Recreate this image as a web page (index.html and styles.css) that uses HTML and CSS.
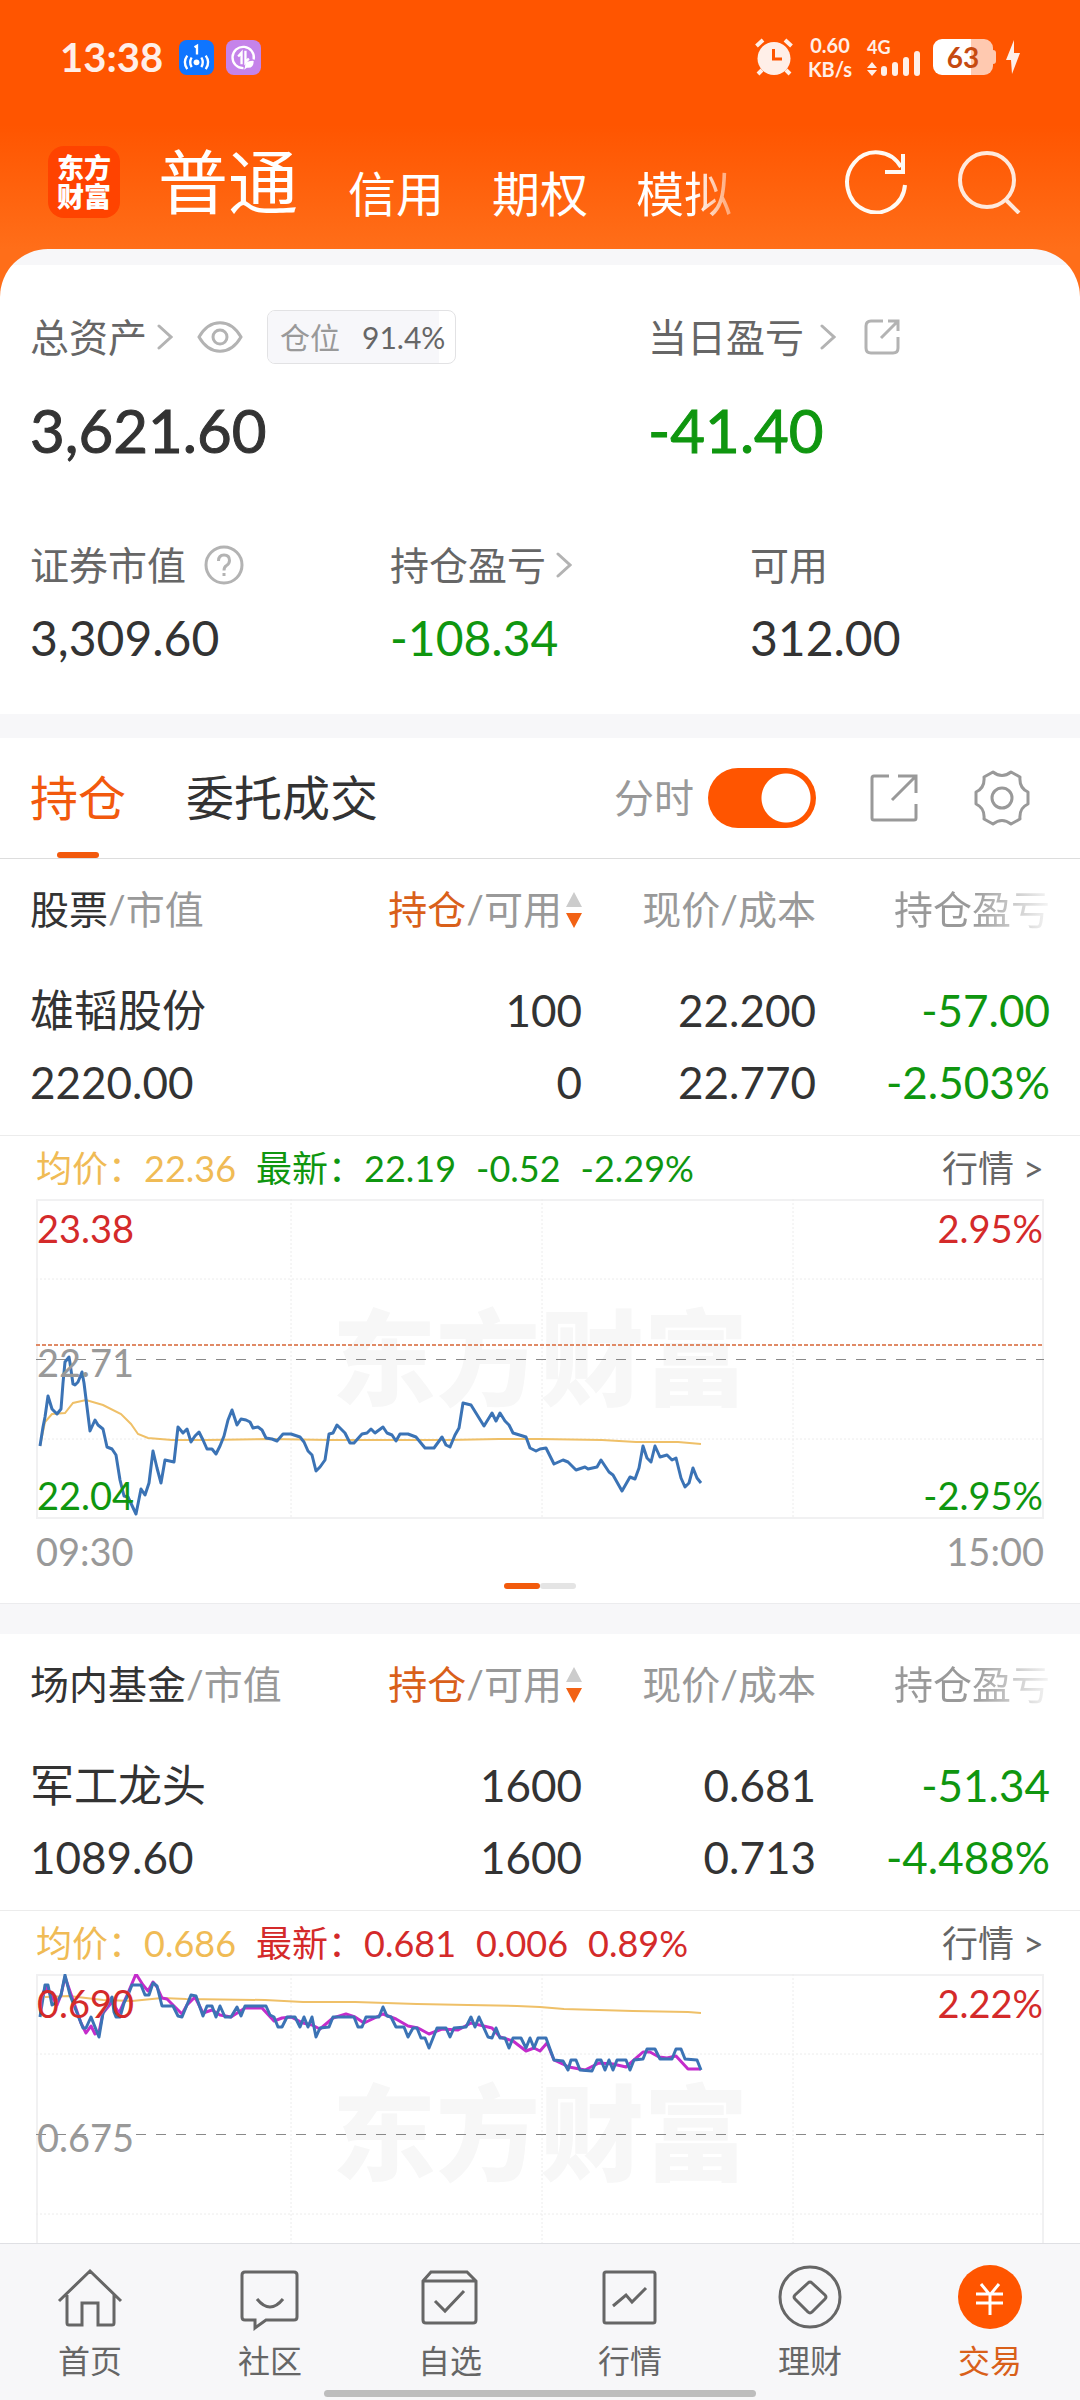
FILE: index.html
```
<!DOCTYPE html>
<html lang="zh-CN">
<head>
<meta charset="utf-8">
<meta name="viewport" content="width=device-width, initial-scale=1">
<title>交易</title>
<link rel="stylesheet" href="styles.css">
</head>
<body>
<div class="app">
  <header class="top">
    <div class="status">
      <div class="status-left">
        <span class="clock">13:38</span>
        <svg class="badge" viewBox="0 0 36 36"><rect width="36" height="36" rx="8" fill="#0f75ff"/><path d="M16 7.500 18.500 6v9" fill="none" stroke="#fff" stroke-width="2.400"/><circle cx="18" cy="23" r="3" fill="#fff"/><path d="M13 18q-3 5 0 10M23 18q3 5 0 10M8.500 16q-5 7 0 14M27.500 16q5 7 0 14" fill="none" stroke="#fff" stroke-width="2.400"/></svg>
        <svg class="badge" viewBox="0 0 36 36"><rect width="36" height="36" rx="8" fill="#c583ea"/><path d="M28.500 20A11 11 0 1 0 18 29M12.500 17l3.500-4v12M20 11v12l3.500-4" fill="none" stroke="#fff" stroke-width="2.400"/><path d="M19.500 28q-.5-7 9-6.500 0 8-7 7l-3 2z" fill="#fff"/></svg>
      </div>
      <div class="status-right">
        <svg class="alarm" viewBox="0 0 38 38"><circle cx="19" cy="20.500" r="16.500" fill="#ffefe8"/><path d="M1.500 8 8 2M36.500 8 30 2M7 32l-4 4M31 32l4 4" stroke="#ffefe8" stroke-width="4"/><path d="M18.500 11v10H27" fill="none" stroke="#f50" stroke-width="3"/></svg>
        <span class="speed"><span>0.60</span><span>KB/s</span></span>
        <span class="signal"><span>4G</span>
          <svg viewBox="0 0 54 26"><path d="M5 12 10 18H0zM5 26 0 20h10z" fill="#ffefe8"/><g fill="#ffefe8"><rect x="14" y="16" width="6" height="10" rx="3"/><rect x="25" y="12" width="6" height="14" rx="3"/><rect x="36" y="7" width="6" height="19" rx="3"/><rect x="47" y="1" width="6" height="25" rx="3"/></g></svg>
        </span>
        <span class="battery">63</span>
        <svg class="bolt" viewBox="0 0 14 34"><path d="M8 0 0 20h5l1 14 8-21H8z" fill="#ffefe8"/></svg>
      </div>
    </div>
    <div class="bar">
      <span class="logo">东方<br>财富</span>
      <nav class="accounts">
        <a class="current" href="#">普通</a><a href="#">信用</a><a href="#">期权</a><a class="faded" href="#">模拟</a>
      </nav>
      <button class="plain" aria-label="刷新"><svg class="i64" viewBox="0 0 64 64"><path d="M61 35a29 30 0 1 1-4-18M59 4v18H41" fill="none" stroke="#fffaf4" stroke-width="4"/></svg></button>
      <button class="plain" aria-label="搜索"><svg class="i64" viewBox="0 0 64 64"><circle cx="29" cy="30" r="27" fill="none" stroke="#ffe9dc" stroke-width="4"/><path d="M48 50 61 63" stroke="#ffe9dc" stroke-width="4"/></svg></button>
    </div>
  </header>

  <main class="content">
    <section class="summary">
      <div class="totals">
        <div>
          <div class="line">
            <span>总资产</span><svg class="chev" viewBox="0 0 16 26"><path d="m2 2 12 11L2 24"/></svg>
            <button class="plain eye" aria-label="显示"><svg viewBox="0 0 46 32"><path d="M2 16C13-3 33-3 44 16 33 35 13 35 2 16z"/><circle cx="23" cy="16" r="7"/></svg></button>
            <span class="chip"><span class="chip-fill" style="width:91.4%"></span><span class="chip-name">仓位</span><span class="chip-num">91.4%</span></span>
          </div>
          <div class="big">3,621.60</div>
        </div>
        <div>
          <div class="line">
            <span>当日盈亏</span><svg class="chev far" viewBox="0 0 16 26"><path d="m2 2 12 11L2 24"/></svg>
            <button class="plain share-s" aria-label="分享"><svg viewBox="0 0 36 36"><path d="M19 2H7Q2 2 2 7v22q0 5 5 5h22q5 0 5-5V18M24 2h10v10M34 2 17 19"/></svg></button>
          </div>
          <div class="big down">-41.40</div>
        </div>
      </div>
      <div class="details">
        <div><div class="line low"><span>证券市值</span><button class="plain help" aria-label="说明"><svg viewBox="0 0 40 40"><circle cx="20" cy="20" r="18"/><path d="M14.500 16q0-6 5.500-6t5.500 5.500q0 3-3 5-2.500 1.500-2.500 5M20 28v3"/></svg></button></div><div class="mid">3,309.60</div></div>
        <div><div class="line low"><span>持仓盈亏</span><svg class="chev" viewBox="0 0 16 26"><path d="m2 2 12 11L2 24"/></svg></div><div class="mid down">-108.34</div></div>
        <div><div class="line low"><span>可用</span></div><div class="mid">312.00</div></div>
      </div>
    </section>

    <section class="block">
      <div class="tabs">
        <a class="tab on" href="#">持仓</a><a class="tab" href="#">委托成交</a>
        <label class="toggle"><span>分时</span><input type="checkbox" role="switch" checked></label>
        <button class="plain share" aria-label="分享"><svg viewBox="0 0 48 48"><path d="M19 2H4Q2 2 2 4v40q0 2 2 2h40q2 0 2-2V30M28 2h18v17M46 2 22 26"/></svg></button>
        <button class="plain gear" aria-label="设置"><svg viewBox="0 0 56 56"><circle cx="28" cy="28" r="10"/><path d="M19 2Q28 9 37 2L46 7Q45 18 54 22V34Q45 38 46 49L37 54Q28 47 19 54L10 49Q11 38 2 34V22Q11 18 10 7z"/></svg></button>
      </div>
      <table class="grid">
        <thead><tr><th class="name"><b>股票</b>/市值</th><th><em>持仓</em>/可用<svg class="sort" viewBox="0 0 16 36"><path d="M8 0 16 15H0z" fill="#ccc"/><path d="M0 21h16L8 36z" fill="#f26214"/></svg></th><th>现价/成本</th><th><span class="fade">持仓盈亏</span></th></tr></thead>
        <tbody><tr><td class="name"><span>雄韬股份</span><span>2220.00</span></td><td><span>100</span><span>0</span></td><td><span>22.200</span><span>22.770</span></td><td class="down"><span>-57.00</span><span>-2.503%</span></td></tr></tbody>
      </table>
      <div class="quote">
        <span class="avg">均价：22.36</span><span class="last down">最新：22.19</span><span class="chg down">-0.52</span><span class="chg down">-2.29%</span><a href="#">行情 &gt;</a>
      </div>
      <div class="chart">
        <span class="mark">东方财富</span>
        <svg viewBox="0 0 1008 320" preserveAspectRatio="none">
          <g class="rule"><path d="M0 80H1008M0 240H1008M255 0V320M506 0V320M757 0V320"/></g>
          <path class="cost" d="M0 146H1008"/><path class="zero" d="M0 160H1008"/>
          <path class="mean" d="M4 247 9 223 16 215 29 214 37 204 50 201 67 206 85 215 95 225 102 235 112 239 136 241 170 241 233 240 295 241 412 241 463 240 504 240 566 241 600 243 642 243 665 245"/>
          <path class="price" d="M4 247 7 228 9 218 12 197 16 210 21 215 25 210 27 184 29 163 33 158 34 164 37 185 39 186 42 183 46 173 48 184 51 208 54 232 59 221 62 226 67 230 71 248 76 250 80 256 84 281 88 297 92 298 100 315 105 290 109 296 113 284 117 252 121 269 125 284 129 261 138 263 142 228 147 234 151 230 155 243 159 237 163 233 167 241 171 250 176 250 180 255 184 247 188 237 192 221 196 211 201 226 205 220 210 221 214 223 217 229 222 228 226 231 230 239 236 240 241 242 247 235 255 235 264 238 268 243 272 252 276 256 280 272 284 268 289 261 293 235 297 234 301 226 309 234 314 244 318 244 326 235 331 234 335 230 339 234 347 228 351 234 356 236 360 242 364 235 372 235 380 238 389 249 398 249 406 238 410 246 414 248 419 236 423 229 427 204 431 205 435 206 448 227 456 214 460 222 464 214 469 222 473 226 477 234 490 238 494 249 500 252 504 250 510 249 518 265 527 261 532 263 540 271 549 268 552 270 561 268 565 261 573 273 577 276 586 292 594 278 599 280 603 269 607 247 611 259 615 263 619 247 624 258 631 256 636 261 640 259 645 279 649 288 653 284 657 269 661 279 665 284"/>
        </svg>
        <div class="scale"><span class="up">23.38</span><span class="up">2.95%</span></div>
        <div class="scale"><span>22.71</span></div>
        <div class="scale"><span class="down">22.04</span><span class="down">-2.95%</span></div>
      </div>
      <div class="axis"><span>09:30</span><span>15:00</span></div>
      <div class="pager"><i class="on"></i><i></i></div>
    </section>

    <section class="block next">
      <table class="grid">
        <thead><tr><th class="name"><b>场内基金</b>/市值</th><th><em>持仓</em>/可用<svg class="sort" viewBox="0 0 16 36"><path d="M8 0 16 15H0z" fill="#ccc"/><path d="M0 21h16L8 36z" fill="#f26214"/></svg></th><th>现价/成本</th><th><span class="fade">持仓盈亏</span></th></tr></thead>
        <tbody><tr><td class="name"><span>军工龙头</span><span>1089.60</span></td><td><span>1600</span><span>1600</span></td><td><span>0.681</span><span>0.713</span></td><td class="down"><span>-51.34</span><span>-4.488%</span></td></tr></tbody>
      </table>
      <div class="quote">
        <span class="avg">均价：0.686</span><span class="last up">最新：0.681</span><span class="chg up">0.006</span><span class="chg up">0.89%</span><a href="#">行情 &gt;</a>
      </div>
      <div class="chart">
        <span class="mark">东方财富</span>
        <svg viewBox="0 0 1008 320" preserveAspectRatio="none">
          <g class="rule"><path d="M0 80H1008M0 240H1008M255 0V320M506 0V320M757 0V320"/></g>
          <path class="zero" d="M0 160H1008"/>
          <path class="mean" d="M9 23 33 22 67 26 96 27 126 24 150 25 229 26 267 28 319 28 381 30 432 31 481 32 504 33 528 35 597 37 652 38 665 39"/>
          <path class="index" d="M7 19 10 13 21 31 25 21 29 3 37 26 45 49 50 59 55 52 59 60 63 58 67 39 76 28 83 39 92 19 100 0 107 11 112 17 117 8 121 13 126 24 131 25 146 40 151 31 159 23 167 39 176 36 184 41 195 43 209 34 226 34 238 47 246 44 255 43 267 49 276 51 284 55 297 44 310 40 319 43 328 49 347 40 360 45 372 52 382 54 393 60 406 55 422 56 435 49 456 54 464 63 477 67 490 77 498 74 504 77 511 69 518 86 533 93 549 96 563 89 577 90 590 93 598 86 607 78 614 78 623 83 631 84 640 82 652 95 665 95"/>
          <path class="price" d="M4 43 9 11 12 11 16 31 21 28 25 21 29 1 34 21 43 44 47 54 50 54 55 43 63 63 67 39 76 23 78 38 80 43 84 43 88 29 92 21 96 11 105 11 109 21 113 21 117 9 121 12 126 32 137 32 142 42 146 43 155 21 160 22 167 42 171 32 176 32 180 43 184 32 189 43 195 43 201 33 205 42 209 32 230 32 234 41 238 43 242 53 246 53 251 43 259 43 264 53 268 43 272 53 276 43 280 63 284 54 293 53 297 43 318 43 322 53 326 53 330 43 343 43 347 33 351 42 355 43 360 53 368 53 372 63 377 54 381 54 385 64 389 64 393 74 401 54 410 54 414 63 418 54 430 53 435 43 439 53 443 43 452 63 456 64 460 54 464 64 469 64 473 74 477 64 485 64 490 74 494 64 498 74 502 64 504 64 510 64 518 86 527 87 532 96 535 86 540 86 544 96 556 97 561 86 565 86 569 96 573 86 577 96 581 86 590 86 594 96 598 86 607 85 611 75 619 75 624 85 636 85 640 75 645 75 649 85 661 86 665 96"/>
        </svg>
        <div class="scale"><span class="up">0.690</span><span class="up">2.22%</span></div>
        <div class="scale"><span>0.675</span></div>
        <div class="scale"></div>
      </div>
    </section>
  </main>

  <nav class="dock">
    <a href="#"><svg viewBox="0 0 64 64"><path d="M1 37 32 7 63 37M9 31V59q0 2 2 2H24V39H40V61H54q2 0 2-2V31"/></svg>首页</a>
    <a href="#"><svg viewBox="0 0 64 64"><path d="M7 8H56q3 0 3 3V53q0 3-3 3H28L17 64V56H7q-3 0-3-3V11q0-3 3-3zM19 35q13 16 26 0"/></svg>社区</a>
    <a href="#"><svg viewBox="0 0 64 64"><path d="M5 17 13 8H49L58 17V56q0 3-3 3H8q-3 0-3-3zH58M17 37 27 47 46 27"/></svg>自选</a>
    <a href="#"><svg viewBox="0 0 64 64"><rect x="6" y="8" width="51" height="51" rx="2"/><path d="M15 42 28 31 34 38 48 24"/></svg>行情</a>
    <a href="#"><svg viewBox="0 0 64 64"><circle cx="32" cy="33" r="30"/><path d="M30 19q2-2 4 0L47 31q2 2 0 4L34 48q-2 2-4 0L17 35q-2-2 0-4z"/></svg>理财</a>
    <a class="on" href="#"><svg viewBox="0 0 64 64"><circle class="disc" cx="32" cy="33" r="32"/><path class="yen" d="M23 20 32 31 41 20M18 30H45M18 39H45M32 30V51"/></svg>交易</a>
    <i class="home-bar"></i>
  </nav>
</div>
</body>
</html>
```
FILE: styles.css
```
* { box-sizing: border-box; }
body {
  margin: 0;
  font-family: Lato, "Noto Sans CJK SC", sans-serif;
  color: #333;
  background: #f7f7f9;
}
a { color: inherit; text-decoration: none; }
.plain { border: 0; padding: 0; background: none; display: block; }
.plain svg { display: block; }
svg { fill: none; }
.up { color: #d42a2a; }
.down { color: #0f960f; }

.app { height: 100vh; display: flex; flex-direction: column; overflow: hidden; }

/* header */
.top {
  flex: none;
  padding-bottom: 48px;
  background: linear-gradient(#f50 125px, #ff6e19 249px);
  color: #fff;
}
.status {
  height: 114px;
  padding: 0 60px;
  display: flex;
  justify-content: space-between;
  align-items: center;
  color: #ffefe8;
  font-weight: 700;
}
.status-left, .status-right { display: flex; align-items: center; }
.status-left { gap: 12px; }
.clock { font-size: 40px; line-height: 48px; margin-right: 4px; }
.badge { width: 35px; height: 35px; }
.alarm { width: 38px; height: 38px; }
.speed { display: flex; flex-direction: column; align-items: center; width: 74px; font-size: 20px; line-height: 24px; }
.signal { display: flex; flex-direction: column; width: 54px; height: 38px; font-size: 18px; line-height: 18px; position: relative; }
.signal svg { position: absolute; left: 0; bottom: 0; width: 54px; }
.battery {
  width: 60px;
  height: 36px;
  margin-left: 12px;
  border-radius: 9px;
  background: linear-gradient(90deg, #fff 63%, #ffc9b0 63%);
  color: #c64a10;
  font-size: 28px;
  line-height: 36px;
  text-align: center;
  position: relative;
}
.battery::after {
  content: "";
  position: absolute;
  left: 60px;
  top: 11px;
  width: 3px;
  height: 14px;
  border-radius: 0 3px 3px 0;
  background: #ffc9b0;
}
.bolt { width: 14px; height: 34px; margin-left: 13px; }
.bar { height: 135px; padding: 0 58px 0 48px; display: flex; align-items: center; }
.logo {
  width: 72px;
  height: 72px;
  padding-top: 7px;
  border-radius: 16px;
  background: #ff4300;
  font-size: 27px;
  font-weight: 900;
  line-height: 29px;
  text-align: center;
}
.accounts { flex: 1; display: flex; align-items: flex-end; gap: 48px; margin-left: 38px; font-size: 48px; line-height: 72px; white-space: nowrap; }
.accounts .current { font-size: 70px; line-height: 96px; margin-right: 2px; }
.faded { background: linear-gradient(90deg, #fff 60%, rgba(255, 255, 255, .4) 100%); -webkit-background-clip: text; background-clip: text; color: transparent; }
.i64 { width: 64px; height: 64px; }
.bar .plain + .plain { margin-left: 50px; }

/* assets */
.content { flex: 1; min-height: 0; margin-top: -48px; overflow-y: auto; scrollbar-width: none; border-radius: 48px 48px 0 0; background: #f7f7f9; }
.summary { padding: 61px 0 46px; background: linear-gradient(#f7f7f9 16px, #fff 16px); }
.totals { display: grid; grid-template-columns: 103fr 77fr; }
.details { display: grid; grid-template-columns: repeat(3, 1fr); margin-top: 73px; }
.totals > div, .details > div { padding-left: 30px; }
.line { height: 53px; display: flex; align-items: center; font-size: 39px; line-height: 40px; color: #666; }
.line.low { height: 40px; }
.chev { width: 16px; height: 26px; margin-left: 10px; stroke: #b3b3b3; stroke-width: 3; stroke-linecap: round; }
.chev.far { margin-left: 16px; }
.eye { margin-left: 24px; }
.eye svg { width: 46px; height: 32px; stroke: #b3b3b3; stroke-width: 3; }
.share-s { margin-left: 28px; }
.share-s svg { width: 36px; height: 36px; stroke: #b3b3b3; stroke-width: 3; }
.help { margin-left: 18px; }
.help svg { width: 40px; height: 40px; stroke: #b3b3b3; stroke-width: 3; }
.chip {
  position: relative;
  height: 54px;
  margin-left: 24px;
  padding: 0 10px 0 12px;
  display: flex;
  align-items: center;
  gap: 22px;
  overflow: hidden;
  border: 1px solid #e2e2e4;
  border-radius: 8px;
  font-size: 30px;
}
.chip-fill { position: absolute; left: 0; top: 0; bottom: 0; background: #f7f7fa; }
.chip-name, .chip-num { position: relative; }
.chip-name { color: #999; }
.big { margin-top: 25px; font-size: 60px; line-height: 84px; -webkit-text-stroke: 1px; }
.mid { margin-top: 23px; font-size: 48px; line-height: 60px; }

/* holdings */
.block { margin-top: 24px; background: #fff; border-bottom: 1px solid #ececee; }
.block.next { margin-top: 30px; }
.tabs { display: flex; align-items: center; height: 121px; padding: 0 50px 0 30px; border-bottom: 1px solid #ddd; }
.tab { position: relative; font-size: 48px; line-height: 120px; margin-right: 60px; }
.tab.on { color: #f2590d; }
.tab.on::after { content: ""; position: absolute; left: 50%; bottom: 0; width: 42px; height: 6px; margin-left: -21px; border-radius: 3px; background: #f2590d; }
.toggle { display: flex; align-items: center; gap: 14px; margin-left: auto; font-size: 40px; line-height: 60px; color: #999; }
.toggle input {
  appearance: none;
  margin: 0;
  width: 108px;
  height: 60px;
  border-radius: 30px;
  background: radial-gradient(circle at 78px 30px, #fff 24px, #f50 25px);
}
.share { margin-left: 54px; }
.share svg { width: 48px; height: 48px; stroke: #999; stroke-width: 3; }
.gear { margin-left: 56px; }
.gear svg { width: 56px; height: 56px; stroke: #999; stroke-width: 3; stroke-linejoin: round; }

.grid { width: 100%; table-layout: fixed; border-collapse: collapse; border-bottom: 1px solid #ececec; }
.grid th { width: 234px; height: 100px; padding: 0; font-size: 39px; line-height: 48px; font-weight: 400; text-align: right; color: #999; white-space: nowrap; }
.grid th.name { width: auto; }
.grid th:last-child, .grid td:last-child { width: 264px; padding-right: 30px; }
.grid .name { padding-left: 30px; text-align: left; }
.grid b { font-weight: 400; color: #333; }
.grid em { font-style: normal; color: #d9601a; }
.sort { width: 16px; height: 36px; margin-left: 4px; vertical-align: -4px; }
.fade { background: linear-gradient(90deg, #999 50%, #fff 105%); -webkit-background-clip: text; background-clip: text; color: transparent; }
.grid td { padding: 15px 0 17px; font-size: 44px; line-height: 72px; text-align: right; }
.grid td span { display: block; }

.quote { display: flex; align-items: center; height: 63px; padding: 0 36px; font-size: 36px; line-height: 60px; }
.avg { color: #f0bb55; }
.last { margin-left: 20px; }
.chg { margin-left: 20px; }
.quote a { margin-left: auto; color: #666; }

.chart {
  position: relative;
  display: flex;
  flex-direction: column;
  justify-content: space-between;
  height: 320px;
  margin: 0 36px;
  padding-top: 5px;
  border: 2px solid #f1f1f2;
  font-size: 38px;
  color: #999;
}
.chart svg { position: absolute; inset: -2px; width: calc(100% + 4px); height: 320px; }
.chart path { vector-effect: non-scaling-stroke; }
.rule { stroke: #ececec; stroke-dasharray: 2 2; }
.cost { stroke: #e08a66; stroke-width: 2; stroke-dasharray: 4 2; }
.zero { stroke: #8a8a8a; stroke-dasharray: 10 10; shape-rendering: crispEdges; }
.mean { stroke: #efc068; stroke-width: 2; }
.price { stroke: #3b73b5; stroke-width: 3; stroke-linejoin: round; }
.index { stroke: #c42ccb; stroke-width: 3; stroke-linejoin: round; }
.mark { position: absolute; inset: 0; text-align: center; font-size: 104px; font-weight: 900; line-height: 314px; color: #f7f7f7; }
.scale { position: relative; display: flex; justify-content: space-between; height: 44px; margin: 0 -1px; line-height: 44px; }
.axis { display: flex; justify-content: space-between; height: 64px; padding: 0 36px; font-size: 38px; line-height: 64px; color: #999; }
.pager { display: flex; justify-content: center; padding-bottom: 14px; }
.pager i { width: 36px; height: 6px; border-radius: 3px; background: #e4e4e4; }
.pager .on { background: #f25a0c; }

/* bottom navigation */
.dock { position: relative; z-index: 1; flex: none; display: flex; height: 157px; padding-top: 20px; border-top: 1px solid #dfe0e4; background: #f7f7f9; }
.dock a { flex: 1; display: flex; flex-direction: column; align-items: center; font-size: 32px; line-height: 36px; color: #666; gap: 15px; }
.dock svg { width: 64px; height: 64px; overflow: visible; stroke: #666; stroke-width: 3; }
.dock .on { color: #d9601a; }
.disc { fill: #f50; stroke: none; }
.dock .yen { stroke: #fff; }
.home-bar { position: absolute; left: 30%; right: 30%; bottom: 3px; height: 7px; border-radius: 4px; background: #bdbdbd; }
```
